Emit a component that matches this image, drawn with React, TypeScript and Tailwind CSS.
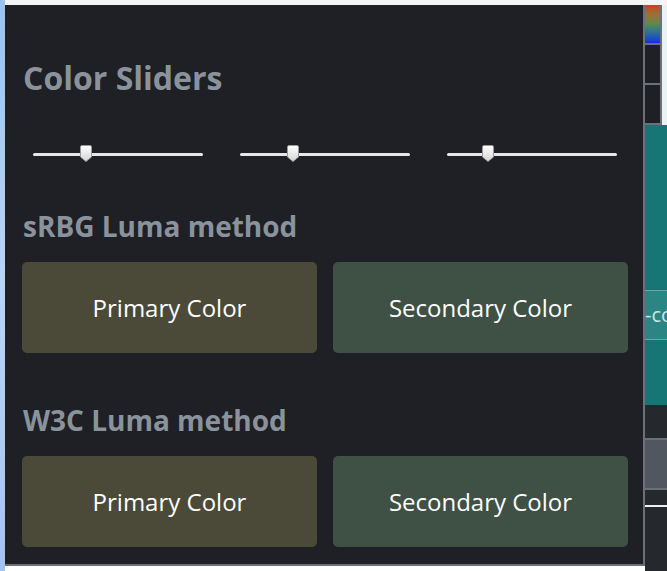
import React from 'react';

type Slider = { id: string; value: number };

const sliders: Slider[] = [
  { id: 'r', value: 0.31 },
  { id: 'g', value: 0.31 },
  { id: 'b', value: 0.24 },
];

const methods = ['sRBG Luma method', 'W3C Luma method'];

function Thumb() {
  return (
    <svg width="12" height="17" viewBox="0 0 12 17" className="block">
      <defs>
        <linearGradient id="thumbFill" x1="0" y1="0" x2="0" y2="1">
          <stop offset="0" stopColor="#ffffff" />
          <stop offset="1" stopColor="#d4d4d4" />
        </linearGradient>
      </defs>
      <path
        d="M2 0.5 H10 Q11.5 0.5 11.5 2 V12 L6 16.5 L0.5 12 V2 Q0.5 0.5 2 0.5 Z"
        fill="url(#thumbFill)"
        stroke="#9a9a9a"
        strokeWidth="1"
      />
    </svg>
  );
}

function RangeSlider({ value }: { value: number }) {
  return (
    <div className="relative h-[18px] w-[170px] flex items-center">
      <div className="h-[3px] w-full bg-[#e6e6e6] rounded-sm" />
      <div className="absolute top-0" style={{ left: `calc(${value * 100}% - 6px)` }}>
        <Thumb />
      </div>
    </div>
  );
}

function ColorButton({ label, tone }: { label: string; tone: 'primary' | 'secondary' }) {
  return (
    <button
      className={
        tone === 'primary'
          ? 'h-[91px] rounded-[5px] bg-[#4b4a38] text-white text-[24px]'
          : 'h-[91px] rounded-[5px] bg-[#3e5144] text-white text-[24px]'
      }
    >
      {label}
    </button>
  );
}

export default function App() {
  return (
    <div className="flex h-[571px] w-[667px] overflow-hidden font-['Open_Sans',sans-serif]">
      {/* left window edge */}
      <div className="w-[5px] h-full bg-gradient-to-b from-[#9cc2ec] via-[#b7d6f6] to-[#a4c4ee]" />

      <div className="flex flex-col flex-1">
        <div className="h-[5px] bg-[#f4f4f4]" />

        <div className="flex flex-1">
          {/* panel */}
          <div className="w-[640px] h-[561px] bg-[#1e2025] border-r-2 border-b-2 border-[#6b7079] pl-[17px] pr-[15px] pt-[53px]">
            <h2 className="text-[32px] font-bold text-[#8a929c] leading-[40px] pl-[1px]">Color Sliders</h2>

            <div className="flex justify-between pl-[11px] pr-[11px] mt-[47px]">
              {sliders.map((s) => (
                <RangeSlider key={s.id} value={s.value} />
              ))}
            </div>

            {methods.map((m, i) => (
              <div key={m} className={i === 0 ? 'mt-[45px]' : 'mt-[49px]'}>
                <h3 className="text-[28px] font-bold text-[#8a929c] leading-[36px] pl-[1px]">{m}</h3>
                <div className="grid grid-cols-2 gap-4 mt-[18px]">
                  <ColorButton label="Primary Color" tone="primary" />
                  <ColorButton label="Secondary Color" tone="secondary" />
                </div>
              </div>
            ))}
          </div>

          {/* what sits behind, to the right */}
          <div className="flex flex-col w-[22px]">
            <div className="flex h-[120px] bg-[#167575]">
              <div className="w-[17px] flex flex-col bg-[#6b7079] gap-[2px] pb-[2px] pr-[2px]">
                <div className="h-[38px] bg-gradient-to-b from-[#c8401c] via-[#5a8a4a] to-[#2222e0]" />
                <div className="h-[38px] bg-[#1e2025]" />
                <div className="h-[38px] bg-[#1e2025]" />
              </div>
              <div className="flex-1 bg-[#e8f4f4]" />
            </div>
            <div className="h-[165px] bg-[#167575]" />
            <div className="h-[50px] bg-[#2b8582] border-y border-[#6aa9a6] text-[#cfe5e3] text-[20px] leading-[48px] overflow-hidden whitespace-nowrap">
              -co
            </div>
            <div className="h-[65px] bg-[#167575]" />
            <div className="h-[33px] bg-[#25282c]" />
            <div className="h-[52px] bg-[#51575f] border-y-2 border-[#6b7079]" />
            <div className="h-[15px] bg-[#25282c]" />
            <div className="h-[2px] bg-[#f0f0f0]" />
            <div className="flex-1 bg-[#25282c]" />
          </div>
        </div>
      </div>
    </div>
  );
}
